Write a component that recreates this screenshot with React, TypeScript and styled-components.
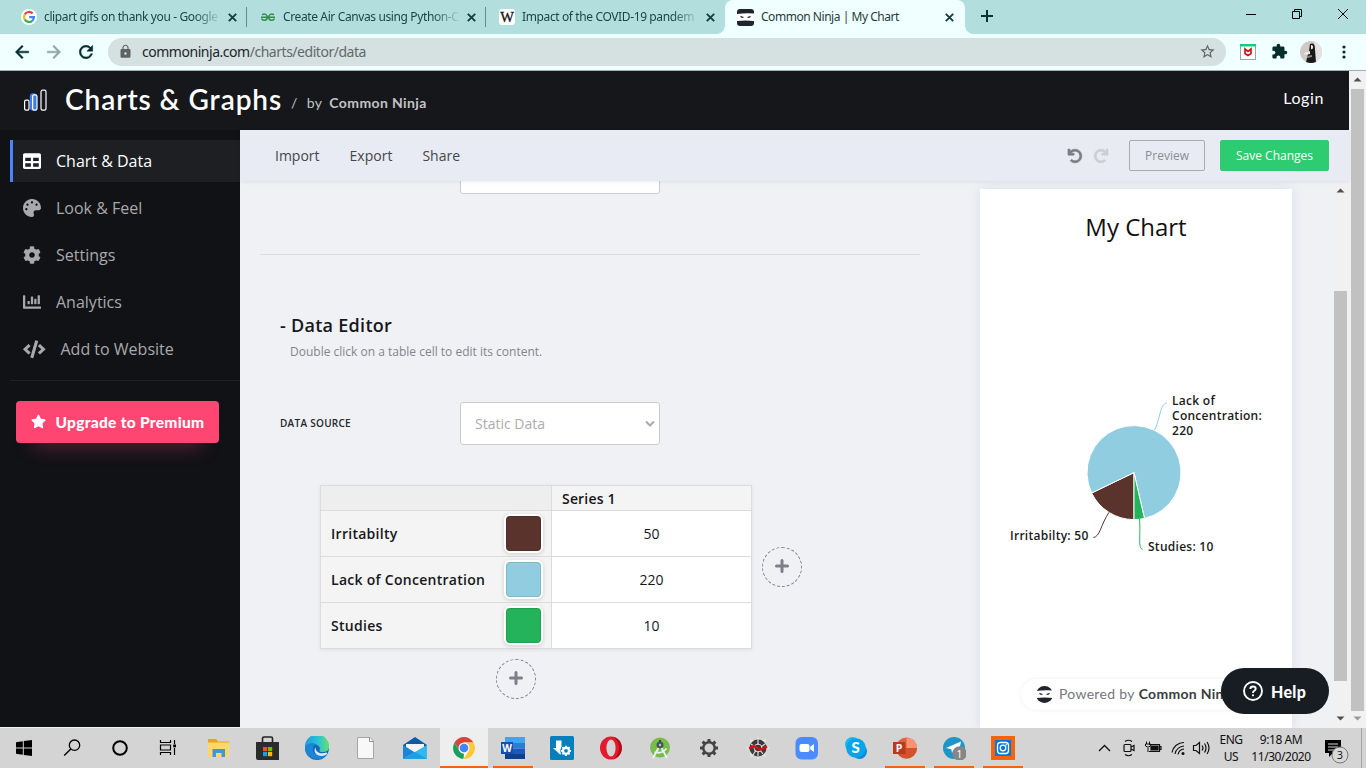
import React from 'react';
import styled, { createGlobalStyle, css } from 'styled-components';
import { FaTable, FaPalette, FaCog, FaChartBar, FaCode, FaStar, FaUndo, FaRedo } from 'react-icons/fa';
import { MdExtension, MdLock, MdStarBorder, MdRefresh, MdArrowBack, MdArrowForward } from 'react-icons/md';

const ui = `'Open Sans', 'Noto Sans', sans-serif`;
const brand = `Lato, 'Open Sans', sans-serif`;
const chrome = `'Noto Sans', 'Open Sans', sans-serif`;

const GlobalStyle = createGlobalStyle`
  * { box-sizing: border-box; }
  body { margin: 0; overflow: hidden; font-family: ${ui}; background: #f0f1f5; }
  svg { display: block; flex: none; }
`;

const Screen = styled.div`
  width: 1366px;
  height: 768px;
  display: flex;
  flex-direction: column;
  overflow: hidden;
`;

/* ---------- browser frame ---------- */

const TabStrip = styled.div`
  flex: none;
  height: 34px;
  display: flex;
  padding-left: 8px;
  background: #b2dfdd;
`;

const Tab = styled.div<{ $active?: boolean; $divider?: boolean }>`
  position: relative;
  width: ${p => (p.$active ? 240 : 239)}px;
  height: 34px;
  display: flex;
  align-items: center;
  padding: 0 9px 0 ${p => (p.$active ? 12 : 13)}px;
  font: 12px/34px ${chrome};
  letter-spacing: -0.46px;
  color: ${p => (p.$active ? '#1f3c3c' : '#1c4644')};
  ${p => p.$divider && css`
    &::after { content: ''; position: absolute; right: 0; top: 7px; width: 1px; height: 20px; background: #5f8b89; }`}
  ${p => p.$active && css`
    background: #f0ffff;
    border-radius: 8px 8px 0 0;
    &::before, &::after { content: ''; position: absolute; bottom: 0; width: 8px; height: 8px; }
    &::before { left: -8px; background: radial-gradient(circle at 0 0, #b2dfdd 7.5px, #f0ffff 8px); }
    &::after { right: -8px; background: radial-gradient(circle at 100% 0, #b2dfdd 7.5px, #f0ffff 8px); }
  `}
`;

const TabTitle = styled.span<{ $fade?: boolean }>`
  width: 177px;
  margin-left: 7px;
  margin-right: 7px;
  white-space: nowrap;
  ${p => p.$fade && css`
    letter-spacing: -0.38px;
    mask-image: linear-gradient(90deg, #000 150px, transparent 178px);
  `}
`;

const NewTab = styled.div`
  margin: 10px 0 0 16px;
`;

const WindowControls = styled.div`
  margin-left: auto;
  display: flex;
  gap: 34px;
  padding: 8px 17px 0 0;
`;

const AddressBar = styled.div`
  flex: none;
  height: 37px;
  display: flex;
  align-items: center;
  padding: 0 13px 1px 12px;
  background: #f0ffff;
  border-bottom: 1px solid #9fb0b0;
  color: #002e2c;
`;

const NavButtons = styled.div`
  display: flex;
  gap: 12px;
  margin-right: 12px;
  path:not([fill='none']) { stroke: currentColor; stroke-width: 0.6px; }
`;

const UrlPill = styled.div`
  width: 1118px;
  height: 28px;
  display: flex;
  align-items: center;
  padding: 0 10px 0 10px;
  border-radius: 14px;
  background: #d5e0e0;
  color: #5c6464;
`;

const Url = styled.span`
  flex: 1;
  margin-left: 9px;
  font: 14px/28px ${chrome};
  letter-spacing: -0.47px;
  color: #616a6a;
  b { font-weight: 400; color: #1c2626; }
`;

const Extensions = styled.div`
  display: flex;
  align-items: center;
  margin-left: 14px;
`;

const ShieldBadge = styled.svg`
  margin-right: 15px;
`;

const Avatar = styled.div`
  width: 22px;
  height: 22px;
  margin: 0 20px 0 12px;
  border-radius: 50%;
  overflow: hidden;
`;

/* ---------- application ---------- */

const Viewport = styled.div`
  flex: none;
  height: 657px;
  display: flex;
`;

const AppFrame = styled.div`
  width: 1349px;
  display: flex;
  flex-direction: column;
`;

const Header = styled.header`
  flex: none;
  height: 59px;
  display: flex;
  align-items: center;
  padding: 0 25px 0 23px;
  background: #16171b;
  color: #fff;
  font-family: ${brand};
`;

const AppTitle = styled.h1`
  width: 217px;
  margin: 0 9px 0 17px;
  padding-bottom: 3px;
  font-size: 28px;
  line-height: 40px;
  font-weight: 600;
  letter-spacing: 0.92px;
  white-space: nowrap;
`;

const ByLine = styled.div`
  flex: 1;
  padding-top: 4px;
  font-size: 14px;
  letter-spacing: 0.38px;
  color: #c2c3c6;
  span { margin: 0 7px 0 9px; }
`;

const Login = styled.a`
  font-size: 16px;
  letter-spacing: 0.6px;
  padding-bottom: 6px;
`;

const Body = styled.div`
  flex: 1;
  min-height: 0;
  display: flex;
`;

const Sidebar = styled.nav`
  width: 240px;
  height: 597px;
  display: flex;
  flex-direction: column;
  padding: 10px 0 0 10px;
  background: #111216;
`;

const NavItem = styled.a<{ $active?: boolean }>`
  height: 42px;
  margin-bottom: 5px;
  display: flex;
  align-items: center;
  gap: 15px;
  padding-left: 10px;
  border-left: 3px solid ${p => (p.$active ? '#4c84ff' : 'transparent')};
  background: ${p => (p.$active ? '#1e1f23' : 'transparent')};
  color: ${p => (p.$active ? '#fff' : '#a9a9ab')};
  font-size: 16px;
`;

const SideDivider = styled.div`
  height: 1px;
  margin: 5px 0 20px;
  background: #1f2024;
`;

const Upgrade = styled.button`
  width: 203px;
  height: 42px;
  margin-left: 6px;
  padding: 0 0 1px 15px;
  display: flex;
  align-items: center;
  gap: 9.5px;
  border: 0;
  border-radius: 4px;
  background: #ff4672;
  box-shadow: 0 19px 18px -17px rgba(255, 70, 114, 0.5);
  color: #fff;
  font: 900 15.5px ${brand};
  letter-spacing: 0.28px;
  white-space: nowrap;
`;

const Workspace = styled.div`
  width: 1109px;
  display: flex;
  flex-direction: column;
`;

const Toolbar = styled.div`
  position: relative;
  z-index: 1;
  flex: none;
  height: 51px;
  display: flex;
  align-items: center;
  padding: 0 20px 0 35px;
  background: #e8ebf3;
  box-shadow: 0 1px 4px rgba(0, 0, 0, 0.08);
`;

const MenuLink = styled.a`
  margin-right: 30px;
  font-size: 14px;
  color: #45464b;
`;

const History = styled.div`
  margin-left: auto;
  margin-right: 21px;
  display: flex;
  gap: 12px;
  color: #7b7d84;
  svg { stroke: currentColor; stroke-width: 26px; overflow: visible; }
  svg + svg { color: #cbced5; }
`;

const Button = styled.button<{ $primary?: boolean }>`
  width: ${p => (p.$primary ? 109 : 76)}px;
  height: 31px;
  margin-left: ${p => (p.$primary ? 15 : 0)}px;
  padding: 0;
  border: 1px solid ${p => (p.$primary ? '#2ecc71' : '#a9abb1')};
  border-radius: 2px;
  background: ${p => (p.$primary ? '#2ecc71' : 'transparent')};
  color: ${p => (p.$primary ? '#fff' : '#8b8d94')};
  font: 12px ${ui};
`;

const Content = styled.div`
  flex: 1;
  min-height: 0;
  display: flex;
  overflow: hidden;
  background: #f0f1f5;
`;

const Editor = styled.main`
  width: 740px;
  height: 546px;
  overflow: hidden;
  padding-left: 20px;
`;

const Field = styled.div`
  width: 200px;
  height: 43px;
  display: flex;
  align-items: center;
  justify-content: space-between;
  padding: 0 3px 0 14px;
  border: 1px solid #ccc;
  border-radius: 3px;
  background: #fff;
  font-size: 14px;
  color: #adadad;
`;

const CutField = styled(Field)`
  margin: -30px 0 60px 200px;
`;

const Rule = styled.div`
  width: 660px;
  height: 1px;
  background: #dcdce0;
`;

const SectionTitle = styled.h2`
  margin: 57px 0 0 20px;
  font-size: 18px;
  line-height: 26px;
  font-weight: 600;
  letter-spacing: 0.28px;
  color: #16171b;
`;

const Hint = styled.p`
  margin: 5px 0 0 30px;
  font-size: 12px;
  line-height: 18px;
  color: #84858c;
`;

const FormRow = styled.div`
  margin-top: 41px;
  padding-left: 20px;
  display: flex;
  align-items: center;
`;

const FieldLabel = styled.label`
  width: 180px;
  padding-bottom: 2px;
  font-size: 10px;
  font-weight: 600;
  letter-spacing: 0.28px;
  color: #26272b;
`;

const TableRow = styled.div`
  display: flex;
  align-items: center;
  gap: 10px;
  margin: 40px 0 0 60px;
`;

const Grid = styled.div`
  display: grid;
  grid-template: 24px repeat(3, 45px) / 230px 199px;
  gap: 1px;
  padding: 1px;
  background: #dcdcdc;
  box-shadow: 0 1px 4px rgba(0, 0, 0, 0.08);
  font-size: 14px;
  color: #16171b;
`;

const Cell = styled.div<{ $kind: 'corner' | 'series' | 'name' | 'value' }>`
  display: flex;
  align-items: center;
  justify-content: ${p => (p.$kind === 'value' ? 'center' : 'space-between')};
  padding: ${p => ({ corner: '0', series: '0 10px', name: '0 8px 0 10px', value: '0' })[p.$kind]};
  background: ${p => ({ corner: '#eee', series: '#f4f4f4', name: '#f4f4f4', value: '#fff' })[p.$kind]};
  font-weight: ${p => (p.$kind === 'value' ? 400 : 600)};
  letter-spacing: ${p => (p.$kind === 'value' ? 0 : p.$kind === 'series' ? 0.18 : 0.28)}px;
`;

const Swatch = styled.span<{ $color: string }>`
  width: 39px;
  height: 39px;
  border: 2px solid #fff;
  border-radius: 6px;
  background: ${p => p.$color};
  box-shadow: 0 1px 4px rgba(0, 0, 0, 0.16), inset 0 0 0 1px rgba(0, 0, 0, 0.1);
`;

const AddButton = styled.button<{ $below?: boolean }>`
  width: 40px;
  height: 40px;
  display: grid;
  place-items: center;
  margin: ${p => (p.$below ? '10px 0 0 236px' : '0')};
  padding: 0 0 2px;
  border: 1px dashed #82848c;
  border-radius: 50%;
  background: transparent;
`;

const Preview = styled.section`
  width: 312px;
  height: 539px;
  margin-top: 8px;
  display: flex;
  flex-direction: column;
  align-items: center;
  background: #fff;
  box-shadow: 0 0 12px rgba(30, 30, 80, 0.09);
`;

const ChartTitle = styled.h3`
  margin: 21px 0 136px;
  font-size: 24px;
  line-height: 34px;
  font-weight: 400;
  color: #111;
`;

const Powered = styled.div`
  width: 230px;
  height: 31px;
  margin-top: 119px;
  display: flex;
  align-items: center;
  padding: 0 0 2px 15px;
  border-radius: 16px;
  box-shadow: 0 0 4px rgba(0, 0, 0, 0.07);
  font: 14px ${brand};
  letter-spacing: 0.3px;
  white-space: nowrap;
  color: #75767a;
  svg { margin: 1px 6px 0 0; }
  b { margin-left: 4px; color: #3a3b3f; font-weight: 700; }
`;

const HelpButton = styled.button`
  position: absolute;
  left: 1221px;
  top: 668px;
  z-index: 3;
  width: 108px;
  height: 46px;
  display: flex;
  align-items: center;
  gap: 8px;
  padding: 0 0 0 22px;
  border: 0;
  border-radius: 23px;
  background: #181d23;
  color: #fff;
  font: 900 16px ${brand};
  letter-spacing: 0.3px;
`;

const Track = styled.div<{ $inner?: boolean }>`
  width: 17px;
  height: ${p => (p.$inner ? '546px' : '656px')};
  margin-left: ${p => (p.$inner ? 'auto' : 0)};
  display: flex;
  flex-direction: column;
  align-items: center;
  padding: ${p => (p.$inner ? '7px' : '6px')} 0 6px;
  background: #f1f1f1;
`;

const Thumb = styled.div<{ $top: number; $height: number }>`
  width: 13px;
  height: ${p => p.$height}px;
  margin: ${p => p.$top}px 0 auto;
  background: #c1c1c1;
`;

/* ---------- taskbar ---------- */

const Taskbar = styled.footer`
  height: 40px;
  display: flex;
  background: #d4d4d4;
  font-family: ${chrome};
`;

const Slot = styled.div<{ $active?: boolean; $open?: boolean; $app?: boolean; $first?: boolean }>`
  position: relative;
  width: 48px;
  height: 40px;
  margin-left: ${p => (p.$first ? 3 : p.$app ? 1 : 0)}px;
  display: grid;
  place-items: center;
  background: ${p => (p.$active ? '#eeeeee' : 'transparent')};
  ${p => (p.$active || p.$open) && css`
    &::after { content: ''; position: absolute; bottom: 0; left: ${p.$active ? 0 : 4}px; right: ${p.$active ? 0 : 4}px; height: 2px; background: #f7630c; }
  `}
`;

const Tray = styled.div`
  margin-left: auto;
  display: flex;
  align-items: center;
`;

const TrayText = styled.div<{ $w: number }>`
  width: ${p => p.$w}px;
  text-align: center;
  font-size: 12px;
  line-height: 17px;
  letter-spacing: -0.45px;
  color: #111;
  white-space: nowrap;
`;

const DesktopEdge = styled.div`
  width: 5px;
  height: 40px;
  border-left: 1px solid #a5a5a5;
`;

/* ---------- drawings ---------- */

const Arrow = ({ up, dim }: { up?: boolean; dim?: boolean }) => (
  <svg width="9" height="5" viewBox="0 0 9 5">
    <path d={up ? 'M0.5 4.5L4.5 0.5L8.5 4.5Z' : 'M0.5 0.5L4.5 4.5L8.5 0.5Z'} fill={dim ? '#9a9a9a' : '#505050'} />
  </svg>
);

const CloseIcon = () => (
  <svg width="9" height="9" viewBox="0 0 9 9" stroke="#173e3d" strokeWidth="1.9">
    <path d="M0.8 0.8L8.2 8.2M8.2 0.8L0.8 8.2" />
  </svg>
);

const GoogleIcon = () => (
  <svg width="16" height="16" viewBox="0 0 16 16" fill="none" strokeWidth="2.2">
    <circle cx="8" cy="8" r="8" fill="#fff" />
    <path d="M11.6 4.4A5 5 0 0 0 3.7 5.5" stroke="#ea4335" />
    <path d="M3.7 5.5A5 5 0 0 0 3.7 10.5" stroke="#fbbc05" />
    <path d="M3.7 10.5A5 5 0 0 0 11.3 11.8" stroke="#34a853" />
    <path d="M11.3 11.8A5 5 0 0 0 13 8.1H8.2" stroke="#4285f4" />
  </svg>
);

const GeeksIcon = () => (
  <svg width="16" height="16" viewBox="0 0 16 16" fill="none" stroke="#2f8d46" strokeWidth="1.5">
    <path d="M1 8.2H15M2.2 6A3 3 0 0 1 7.3 8.2A3 3 0 0 1 1.6 9.6M13.8 6A3 3 0 0 0 8.7 8.2A3 3 0 0 0 14.4 9.6" />
  </svg>
);

const WikiIcon = () => (
  <svg width="16" height="16" viewBox="0 0 16 16">
    <rect width="16" height="16" rx="3" fill="#fff" />
    <text x="8" y="12.8" textAnchor="middle" fontFamily="Liberation Serif, serif" fontSize="14.5" letterSpacing="0" fill="#111" stroke="#111" strokeWidth="0.3">W</text>
  </svg>
);

const NinjaSvg = styled.svg<{ $round?: boolean }>`
  border-radius: ${p => (p.$round ? '50%' : '3px')};
`;

const NinjaIcon = ({ round }: { round?: boolean }) => (
  <NinjaSvg $round={round} width="17" height="17" viewBox="0 0 16 16">
    <rect width="16" height="16" fill="#fff" />
    <path d="M0 0H16V4.2Q8 3.4 0 4.8ZM0 11.4Q8 10.4 16 11.4V16H0Z" fill="#20242c" />
    <path d="M3 6.4L6.3 7.6L5.8 8.4L3.6 8ZM13 6.4L9.7 7.6L10.2 8.4L12.4 8Z" fill="#20242c" />
  </NinjaSvg>
);

const BarsLogo = () => (
  <svg width="25" height="24" viewBox="0 0 25 24" fill="none" stroke="#fff" strokeWidth="1.2">
    <rect x="6.8" y="4.2" width="7" height="17.6" rx="3.3" fill="#3f7cf4" stroke="none" />
    <rect x="1.6" y="11.2" width="4.4" height="10" rx="1.4" />
    <rect x="9.6" y="5.8" width="4.4" height="15.4" rx="1.6" />
    <rect x="18" y="1.2" width="5" height="20" rx="1.6" />
  </svg>
);

const slices = [
  { value: 50, color: '#5a332d' },
  { value: 220, color: '#90cde0' },
  { value: 10, color: '#24b35a' },
];

const PieChart = () => {
  const cx = 154;
  const cy = 92.6;
  const r = 47;
  const total = 280;
  let angle = Math.PI;
  return (
    <svg width="312" height="180" viewBox="0 0 312 180" fontFamily={ui} fontSize="12" fontWeight="600" letterSpacing="0.27" fill="#1b1b1b">
      {slices.map(s => {
        const start = angle;
        angle += (s.value / total) * Math.PI * 2;
        const at = (a: number) => `${cx + r * Math.sin(a)} ${cy - r * Math.cos(a)}`;
        return (
          <path
            key={s.color}
            d={`M${cx} ${cy}L${at(start)}A${r} ${r} 0 ${angle - start > Math.PI ? 1 : 0} 1 ${at(angle)}Z`}
            fill={s.color}
            stroke="#fff"
            strokeWidth="1"
          />
        );
      })}
      <g fill="none" strokeWidth="1">
        <path d="M174.5 50C180 40 180 23.5 186.8 23" stroke="#90cde0" />
        <path d="M129 132.3C121 144 120 157 113.3 157.5" stroke="#5a332d" />
        <path d="M159.4 139C161 153 157.5 169 162.7 169.3" stroke="#24b35a" />
      </g>
      <text x="192" y="25">Lack of</text>
      <text x="192" y="40">Concentration:</text>
      <text x="192" y="55">220</text>
      <text x="30" y="160">Irritabilty: 50</text>
      <text x="168" y="171">Studies: 10</text>
    </svg>
  );
};

const Plus = () => (
  <svg width="14" height="14" viewBox="0 0 14 14" stroke="#7c7e89" strokeWidth="3" strokeLinecap="round">
    <path d="M7 1.5V12.5M1.5 7H12.5" />
  </svg>
);

const Icon24 = ({ children }: { children: React.ReactNode }) => (
  <svg width="24" height="24" viewBox="0 0 24 24" fill="none">{children}</svg>
);

const systemIcons = [
  <Icon24 key="start"><path d="M4 6.3L10.8 5.3V11.6H4ZM11.8 5.1L20 4V11.6H11.8ZM4 12.5H10.8V18.8L4 17.8ZM11.8 12.5H20V20L11.8 18.9Z" fill="#000" /></Icon24>,
  <Icon24 key="search"><circle cx="14.5" cy="9.2" r="5.2" stroke="#000" strokeWidth="1.3" /><path d="M10.8 13L4.2 19.6" stroke="#000" strokeWidth="1.4" /></Icon24>,
  <Icon24 key="cortana"><circle cx="12" cy="12" r="6.8" stroke="#000" strokeWidth="2" /></Icon24>,
  <Icon24 key="tasks"><path d="M4.5 4V6.5H14.5V4M4.5 19V16.5H14.5V19M4.5 9H14.5V14H4.5ZM18.5 4V8M18.5 12V19" stroke="#000" strokeWidth="1.2" /><rect x="17.2" y="8.5" width="2.8" height="2.8" fill="#000" /></Icon24>,
];

type App = { key: string; active?: boolean; open?: boolean; art: React.ReactNode };

const apps: App[] = [
  { key: 'explorer', art: <><path d="M1 3H9L11 5.5H22V20H1Z" fill="#e8a51c" /><path d="M1 6.5H22V21H1Z" fill="#ffd766" /><path d="M5.5 21V13H18V21H14.5V17H9V21Z" fill="#3e97de" /></> },
  { key: 'store', art: <><path d="M6.5 7V2.5Q6.5 1 8 1H15Q16.5 1 16.5 2.5V7" stroke="#222" strokeWidth="1.6" /><path d="M0 6H23V24H2Q0 24 0 22Z" fill="#2b2b2d" /><path d="M7 11H11.2V15.2H7Z" fill="#f25022" /><path d="M12 11H16.2V15.2H12Z" fill="#7fba00" /><path d="M7 16H11.2V20.2H7Z" fill="#00a4ef" /><path d="M12 16H16.2V20.2H12Z" fill="#ffb900" /></> },
  { key: 'edge', art: <><defs><linearGradient id="edgeTop" x1="0" x2="1"><stop offset="0" stopColor="#1c9be0" /><stop offset="0.55" stopColor="#2bc3d2" /><stop offset="1" stopColor="#66e06a" /></linearGradient></defs><circle cx="12" cy="12" r="12" fill="#1268b8" /><path d="M0 10A12 12 0 0 1 24 11C24 15 20 16.5 16 16Q13.5 15.5 15 13C15 9 9 7 5 8Q1.5 9 0 12Z" fill="url(#edgeTop)" /><path d="M0 12C1 7 8 6 11 8.5C7 9 7 15 10 18Q15 22 21 19A12 12 0 0 1 0 12Z" fill="#1b86d6" /><path d="M10.5 11C10 15 14 19 21.5 16.5Q23 17 21.5 18.5C14 23 7 17 10.5 11Z" fill="#d9e9f2" /></> },
  { key: 'file', art: <><path d="M3.5 1.5H16L19.5 5V22.5H3.5Z" fill="#f8f8f8" stroke="#a5a5a5" /><path d="M15.5 1.5V5.5H19.5" stroke="#8d8d8d" /></> },
  { key: 'mail', art: <><path d="M0 9L12 1L24 9V12H0Z" fill="#0b5ba8" /><path d="M3 8H21V18H3Z" fill="#f4f4f4" /><path d="M0 9L12 16.5L0 23Z" fill="#1b86d4" /><path d="M24 9V23H0L14 14.8Z" fill="#32b8f0" /><path d="M0 23L12 16L24 23Z" fill="#1da0e6" /></> },
  { key: 'chrome', active: true, art: <><circle cx="12" cy="12" r="11" fill="#fff" /><path d="M2.5 6.5A11 11 0 0 1 21.5 6.5H12L7.3 14.7Z" fill="#db4437" /><path d="M2.5 6.5L7.3 14.7Q9 17.5 12 17.5L11.5 23A11 11 0 0 1 2.5 6.5Z" fill="#1a9f5b" /><path d="M21.5 6.5A11 11 0 0 1 11.5 23L16.7 14.7Q18 12 16.5 9L12 6.5Z" fill="#fcc934" /><circle cx="12" cy="12" r="5.5" fill="#f2f2f2" /><circle cx="12" cy="12" r="4.3" fill="#4285f4" /></> },
  { key: 'word', open: true, art: <><path d="M4 1H24V7H4Z" fill="#41a5ee" /><path d="M4 7H24V12.5H4Z" fill="#2b7cd3" /><path d="M4 12.5H24V18H4Z" fill="#185abd" /><path d="M4 18H24V23H4Z" fill="#103f91" /><path d="M0 6H12V18H0Z" fill="#1650ac" /><text x="6" y="15.7" textAnchor="middle" fontFamily={ui} fontWeight="700" fontSize="10" fill="#fff">W</text></> },
  { key: 'setup', art: <><rect width="24" height="24" rx="1.5" fill="#0680bd" /><path d="M6 4.5H11.5V11L11 18.5Q9 18 7.5 16L3 12H6Z" fill="#fff" /><circle cx="16" cy="14.8" r="5.8" fill="#0680bd" /><circle cx="16" cy="14.8" r="3" stroke="#fff" strokeWidth="2.2" /><path d="M16 9.7V12M16 17.6V19.9M10.9 14.8H13.2M18.8 14.8H21.1M12.4 11.2L14 12.8M19.6 11.2L18 12.8M12.4 18.4L14 16.8M19.6 18.4L18 16.8" stroke="#fff" strokeWidth="1.7" /></> },
  { key: 'opera', art: <><ellipse cx="12" cy="12" rx="11" ry="11.5" fill="#e51a2c" /><path d="M15 1A11 11.5 0 0 1 15 23Q20 18 20 12T15 1Z" fill="#a90e1e" /><ellipse cx="12" cy="12" rx="4.6" ry="8.6" fill="#d4d4d4" /></> },
  { key: 'android', art: <><circle cx="12" cy="11.5" r="10" fill="#78bd4b" /><path d="M12 4V8" stroke="#38474f" strokeWidth="2" /><circle cx="12" cy="9" r="3.5" fill="#46545c" /><circle cx="12" cy="9" r="1.2" fill="#b7c4c9" /><path d="M10.5 12L5 22M13.5 12L19 22M6.5 16Q13 18.5 18.5 12.5" stroke="#eef1f2" strokeWidth="1.8" /></> },
  { key: 'gear', art: <><circle cx="12" cy="12" r="5.7" stroke="#444" strokeWidth="2.4" /><path d="M12 3V6M12 18V21M3 12H6M18 12H21M5.6 5.6L7.6 7.6M16.4 16.4L18.4 18.4M18.4 5.6L16.4 7.6M7.6 16.4L5.6 18.4" stroke="#444" strokeWidth="3" /></> },
  { key: 'analysis', art: <><path d="M12 0L14 5L20 3L19 9L24 12L19 15L20 21L14 19L12 24L10 19L4 21L5 15L0 12L5 9L4 3L10 5Z" fill="#e6e6e6" /><circle cx="12" cy="12" r="8.5" fill="#3b3b3b" /><circle cx="12" cy="12" r="4" stroke="#ccc" /><path d="M12 3.5V9M12 15V20M5 8L9 11M19 8L15 11M7 19L10 14M17 18L14 14" stroke="#ddd" strokeWidth="1.2" /><path d="M3 12.5L6.5 10.5C9.5 9 12 14.5 15.5 13.5L21 10.5" stroke="#e00b12" strokeWidth="2.4" /></> },
  { key: 'zoom', art: <><rect x="0.5" y="1" width="22.5" height="22.5" rx="6" fill="#4a8cff" /><rect x="4.5" y="8" width="10" height="8" rx="2" fill="#fff" /><path d="M15.2 10.8L19 8V16L15.2 13.2Z" fill="#fff" /></> },
  { key: 'skype', art: <><circle cx="8.5" cy="8.5" r="7.5" fill="#1ab8f0" /><circle cx="15.5" cy="15.5" r="7.5" fill="#0d8ad8" /><circle cx="12" cy="12" r="9.8" fill="#0aa5e8" /><text x="11.7" y="17.2" textAnchor="middle" fontFamily={brand} fontWeight="900" fontSize="15" fill="#fff">S</text></> },
  { key: 'powerpoint', open: true, art: <><circle cx="13.5" cy="12" r="10.5" fill="#e0603f" /><path d="M13.5 1.5A10.5 10.5 0 0 1 24 12H13.5Z" fill="#ff9273" /><path d="M3 12H24A10.5 10.5 0 0 1 3 12Z" fill="#d35230" /><path d="M0 6H12.5V18H0Z" fill="#bb3a1d" /><text x="6" y="15.7" textAnchor="middle" fontFamily={ui} fontWeight="700" fontSize="10.5" fill="#fff">P</text></> },
  { key: 'telegram', open: true, art: <><circle cx="12" cy="12" r="11" fill="#1e96c8" /><path d="M4 12L19 5.5L16.5 17.5L12 14.5L10 17L9.3 13.3Z" fill="#fff" /><circle cx="17.5" cy="17.5" r="7.2" fill="#868686" /><text x="17.3" y="21.5" textAnchor="middle" fontFamily={ui} fontSize="11" fill="#fff">1</text></> },
  { key: 'instagram', open: true, art: <><path d="M0 0H24V24H0Z" fill="#f7630c" /><path d="M4 4H20V20H4Z" fill="#0078d7" /><rect x="6.5" y="6.5" width="11" height="11" rx="3" stroke="#fff" strokeWidth="1.3" /><circle cx="12" cy="12" r="2.8" stroke="#fff" strokeWidth="1.3" /><circle cx="15.3" cy="8.8" r="0.7" fill="#fff" /></> },
];

const TrayIcons = () => (
  <svg width="114" height="24" viewBox="0 0 114 24" fill="none" stroke="#111" strokeWidth="1.2">
    <path d="M1 15L6.5 9.5L12 15" strokeWidth="1.4" />
    <path d="M27 5.5Q30.5 3 34 5.5M27 18.5Q30.5 21 34 18.5" />
    <rect x="26" y="8.5" width="7" height="7" rx="1" />
    <path d="M33 11L36 9.5V14.5L33 13" />
    <path d="M51 8.5H61.5V15.5H51M61.5 10.5H63V13.5H61.5" />
    <path d="M53 10H60V14H53Z" fill="#111" />
    <path d="M48.5 5.5V8M51.5 5.5V8M47.5 8H52.5V10Q50 12.5 47.5 10ZM50 12V16" strokeWidth="1" />
    <path d="M74 16.5A12 12 0 0 1 86 6.5M77 18A10 10 0 0 1 86 10M80 18.5A7 7 0 0 1 86 13" />
    <circle cx="85" cy="17.5" r="1.5" fill="#111" stroke="none" />
    <path d="M95.5 9.5H98L101.5 6.5V17.5L98 14.5H95.5ZM104 9.5Q106 12 104 14.5M106.5 7.5Q109.5 12 106.5 16.5M109 6Q113 12 109 18" />
  </svg>
);

const tabs = [
  { icon: <GoogleIcon />, title: 'clipart gifs on thank you - Google', divider: true },
  { icon: <GeeksIcon />, title: 'Create Air Canvas using Python-C', divider: true },
  { icon: <WikiIcon />, title: 'Impact of the COVID-19 pandem' },
  { icon: <NinjaIcon />, title: 'Common Ninja | My Chart', active: true },
];

const nav = [
  { icon: <FaTable size={18} />, label: 'Chart & Data', active: true },
  { icon: <FaPalette size={18} />, label: 'Look & Feel' },
  { icon: <FaCog size={18} />, label: 'Settings' },
  { icon: <FaChartBar size={18} />, label: 'Analytics' },
  { icon: <FaCode size={22.5} />, label: 'Add to Website' },
];

const rows = [
  { name: 'Irritabilty', color: '#5a332d', value: 50 },
  { name: 'Lack of Concentration', color: '#90cde0', value: 220 },
  { name: 'Studies', color: '#24b35a', value: 10 },
];

export default function App() {
  return (
    <Screen>
      <GlobalStyle />
      <TabStrip>
        {tabs.map(t => (
          <Tab key={t.title} $active={t.active} $divider={t.divider}>
            {t.icon}
            <TabTitle $fade={!t.active}>{t.title}</TabTitle>
            <CloseIcon />
          </Tab>
        ))}
        <NewTab>
          <svg width="12" height="12" viewBox="0 0 12 12" stroke="#0d3231" strokeWidth="2"><path d="M6 0V12M0 6H12" /></svg>
        </NewTab>
        <WindowControls>
          <svg width="12" height="12" viewBox="0 0 12 12" stroke="#000"><path d="M1 6.5H11" /></svg>
          <svg width="12" height="12" viewBox="0 0 12 12" stroke="#000" fill="none"><path d="M1.5 3.5H8.5V10.5H1.5ZM3.5 3.5V1.5H10.5V8.5H8.5" /></svg>
          <svg width="12" height="12" viewBox="0 0 12 12" stroke="#000"><path d="M1 1L11 11M11 1L1 11" /></svg>
        </WindowControls>
      </TabStrip>
      <AddressBar>
        <NavButtons>
          <MdArrowBack size={20} />
          <MdArrowForward size={20} color="#8fa5a4" />
          <MdRefresh size={20} />
        </NavButtons>
        <UrlPill>
          <MdLock size={15} />
          <Url><b>commoninja.com</b>/charts/editor/data</Url>
          <MdStarBorder size={17} />
        </UrlPill>
        <Extensions>
          <ShieldBadge width="16" height="16" viewBox="0 0 16 16" fill="none">
            <rect x="0.5" y="0.5" width="15" height="15" fill="#fff" stroke="#9aa5a5" />
            <path d="M0 0H16V2.5H0Z" fill="#0fcf7c" />
            <path d="M5 5V9.5L8 11.5L11 9.5V5L8 7.5Z" stroke="#c01818" strokeWidth="1.7" />
          </ShieldBadge>
          <MdExtension size={17} />
          <Avatar>
            <svg width="22" height="22" viewBox="0 0 22 22">
              <rect width="22" height="22" fill="#cfc9c8" />
              <path d="M14 0H22V22H16Z" fill="#e6e2e1" />
              <path d="M10 3Q15 1 15 8L16 22H6Q7 15 9 10Z" fill="#1a1a1c" />
              <path d="M11 4Q13.5 4 13 7Q12 9 11 8ZM4 12L10 10V13L5 14Z" fill="#efe9e6" />
              <path d="M7 15L12 14V16L7 17Z" fill="#8b8583" />
            </svg>
          </Avatar>
          <svg width="4" height="14" viewBox="0 0 4 14" fill="#002e2c"><circle cx="2" cy="2" r="1.6" /><circle cx="2" cy="7" r="1.6" /><circle cx="2" cy="12" r="1.6" /></svg>
        </Extensions>
      </AddressBar>
      <Viewport>
        <AppFrame>
          <Header>
            <BarsLogo />
            <AppTitle>Charts &amp; Graphs</AppTitle>
            <ByLine>/<span>by</span><b>Common Ninja</b></ByLine>
            <Login>Login</Login>
          </Header>
          <Body>
            <Sidebar>
              {nav.map(n => (
                <NavItem key={n.label} $active={n.active}>{n.icon}{n.label}</NavItem>
              ))}
              <SideDivider />
              <Upgrade><FaStar size={15} />Upgrade to Premium</Upgrade>
            </Sidebar>
            <Workspace>
              <Toolbar>
                <MenuLink>Import</MenuLink>
                <MenuLink>Export</MenuLink>
                <MenuLink>Share</MenuLink>
                <History><FaUndo size={14} /><FaRedo size={14} /></History>
                <Button>Preview</Button>
                <Button $primary>Save Changes</Button>
              </Toolbar>
              <Content>
                <Editor>
                  <CutField />
                  <Rule />
                  <SectionTitle>- Data Editor</SectionTitle>
                  <Hint>Double click on a table cell to edit its content.</Hint>
                  <FormRow>
                    <FieldLabel>DATA SOURCE</FieldLabel>
                    <Field>
                      Static Data
                      <svg width="12" height="8" viewBox="0 0 12 8" fill="none" stroke="#aaa" strokeWidth="2"><path d="M2 1.5L6 5.5L10 1.5" /></svg>
                    </Field>
                  </FormRow>
                  <TableRow>
                    <Grid>
                      <Cell $kind="corner" />
                      <Cell $kind="series">Series 1</Cell>
                      {rows.map(r => (
                        <React.Fragment key={r.name}>
                          <Cell $kind="name">{r.name}<Swatch $color={r.color} /></Cell>
                          <Cell $kind="value">{r.value}</Cell>
                        </React.Fragment>
                      ))}
                    </Grid>
                    <AddButton><Plus /></AddButton>
                  </TableRow>
                  <AddButton $below><Plus /></AddButton>
                </Editor>
                <Preview>
                  <ChartTitle>My Chart</ChartTitle>
                  <PieChart />
                  <Powered><NinjaIcon round />Powered by <b>Common Ninja</b></Powered>
                </Preview>
                <Track $inner>
                  <Arrow up />
                  <Thumb $top={98} $height={390} />
                  <Arrow />
                </Track>
              </Content>
            </Workspace>
          </Body>
        </AppFrame>
        <Track>
          <Arrow up />
          <Thumb $top={7} $height={622} />
          <Arrow dim />
        </Track>
      </Viewport>
      <HelpButton>
        <svg width="20" height="20" viewBox="0 0 20 20" fill="none" stroke="#fff" strokeWidth="1.9">
          <circle cx="10" cy="10" r="9" />
          <path d="M7.3 8Q7.3 5.5 10 5.5T12.7 7.8Q12.7 9.2 11 10Q10 10.5 10 12" />
          <circle cx="10" cy="14.3" r="1.1" fill="#fff" stroke="none" />
        </svg>
        Help
      </HelpButton>
      <Taskbar>
        {systemIcons.map((icon, i) => <Slot key={i}>{icon}</Slot>)}
        {apps.map((a, i) => (
          <Slot key={a.key} $app $first={i === 0} $active={a.active} $open={a.open}>
            <Icon24>{a.art}</Icon24>
          </Slot>
        ))}
        <Tray>
          <TrayIcons />
          <TrayText $w={38}>ENG<br />US</TrayText>
          <TrayText $w={62}>9:18 AM<br />11/30/2020</TrayText>
          <svg width="49" height="40" viewBox="0 0 49 40">
            <path d="M13 12H29V25H21L17 29V25H13Z" fill="#000" />
            <path d="M16 16H26M16 19H26M16 22H23" stroke="#d4d4d4" />
            <circle cx="28" cy="27" r="8" fill="#d8d8d8" stroke="#777" />
            <text x="28" y="31" textAnchor="middle" fontFamily={ui} fontSize="11" fill="#111">3</text>
          </svg>
          <DesktopEdge />
        </Tray>
      </Taskbar>
    </Screen>
  );
}
